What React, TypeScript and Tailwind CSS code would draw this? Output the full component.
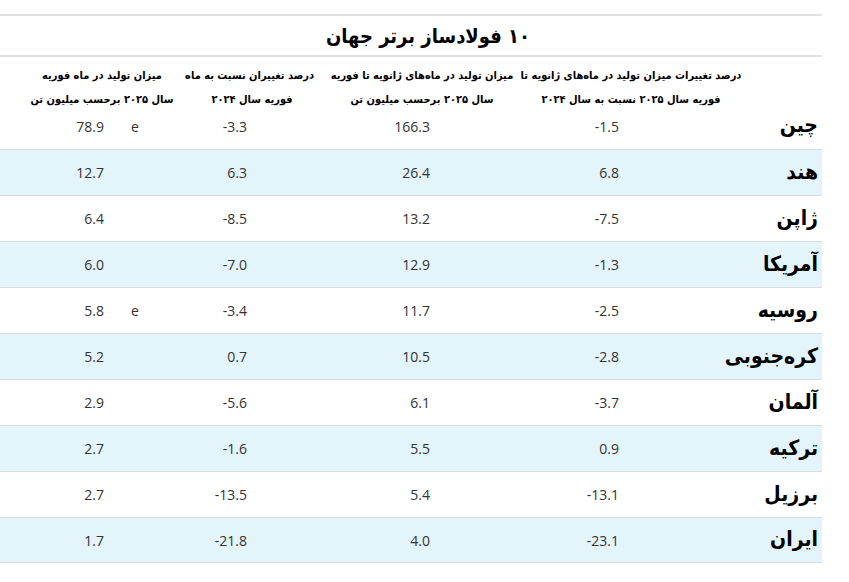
import React from 'react';

const rows = [
  { name: 'چین', c1: '-1.5', c2: '166.3', c3: '-3.3', c4: '78.9', e: true },
  { name: 'هند', c1: '6.8', c2: '26.4', c3: '6.3', c4: '12.7' },
  { name: 'ژاپن', c1: '-7.5', c2: '13.2', c3: '-8.5', c4: '6.4' },
  { name: 'آمریکا', c1: '-1.3', c2: '12.9', c3: '-7.0', c4: '6.0' },
  { name: 'روسیه', c1: '-2.5', c2: '11.7', c3: '-3.4', c4: '5.8', e: true },
  { name: 'کره‌جنوبی', c1: '-2.8', c2: '10.5', c3: '0.7', c4: '5.2' },
  { name: 'آلمان', c1: '-3.7', c2: '6.1', c3: '-5.6', c4: '2.9' },
  { name: 'ترکیه', c1: '0.9', c2: '5.5', c3: '-1.6', c4: '2.7' },
  { name: 'برزیل', c1: '-13.1', c2: '5.4', c3: '-13.5', c4: '2.7' },
  { name: 'ایران', c1: '-23.1', c2: '4.0', c3: '-21.8', c4: '1.7' },
];

const persian = { fontFamily: '"DejaVu Sans Condensed", "DejaVu Sans", sans-serif' };
const latin = { fontFamily: '"Open Sans", "DejaVu Sans", sans-serif' };

const App = () => {
  return (
    <div className="w-[849px] h-[582px] bg-white overflow-hidden pt-[14px]">
      <div className="w-[822px]">
        {/* Title */}
        <div className="h-[43px] border-y-2 border-[#e0e0e0] flex items-center justify-center">
          <h1 dir="rtl" className="text-[20px] font-bold text-black pl-[34px]" style={persian}>
            ۱۰ فولادساز برتر جهان
          </h1>
        </div>

        {/* Header */}
        <div
          className="grid grid-cols-[190px_140px_190px_222px_80px] h-[50px] items-start pt-[7px] text-[11px] font-bold text-black leading-[24px] whitespace-nowrap"
          style={persian}
          dir="ltr"
        >
          <div dir="rtl" className="text-center pl-[14px]">
            میزان تولید در ماه فوریه
            <br />
            سال ۲۰۲۵ برحسب میلیون تن
          </div>
          <div dir="rtl" className="text-center pr-[16px] tracking-[-0.2px]">
            درصد تغییران نسبت به ماه
            <br />
            فوریه سال ۲۰۲۴
          </div>
          <div dir="rtl" className="text-center pr-[6px] tracking-[-0.2px]">
            میزان تولید در ماه‌های ژانویه تا فوریه
            <br />
            سال ۲۰۲۵ برحسب میلیون تن
          </div>
          <div dir="rtl" className="text-center">
            درصد تغییرات میزان تولید در ماه‌های ژانویه تا
            <br />
            فوریه سال ۲۰۲۵ نسبت به سال ۲۰۲۴
          </div>
          <div />
        </div>

        {/* Rows */}
        {rows.map((r, i) => (
          <div
            key={r.name}
            className={`grid grid-cols-[190px_140px_190px_222px_80px] items-center text-[14px] text-[#333] ${
              i === 0 ? 'h-[42px] pb-[4px]' : 'h-[46px] border-t border-[#dcdcdc]'
            } ${i % 2 === 1 ? 'bg-[#e3f4fb]' : 'bg-white'} ${i === rows.length - 1 ? 'border-b' : ''}`}
            style={latin}
          >
            <div className="flex items-center">
              <span className="w-[104px] text-right">{r.c4}</span>
              {r.e && <span className="ml-[27px]">e</span>}
            </div>
            <div className="text-right pr-[83px]">{r.c3}</div>
            <div className="text-right pr-[90px]">{r.c2}</div>
            <div className="text-right pr-[123px]">{r.c1}</div>
            <div dir="rtl" className="text-right pr-[4px] text-[21px] font-bold text-black whitespace-nowrap" style={persian}>
              {r.name}
            </div>
          </div>
        ))}
      </div>
    </div>
  );
};

export default App;
